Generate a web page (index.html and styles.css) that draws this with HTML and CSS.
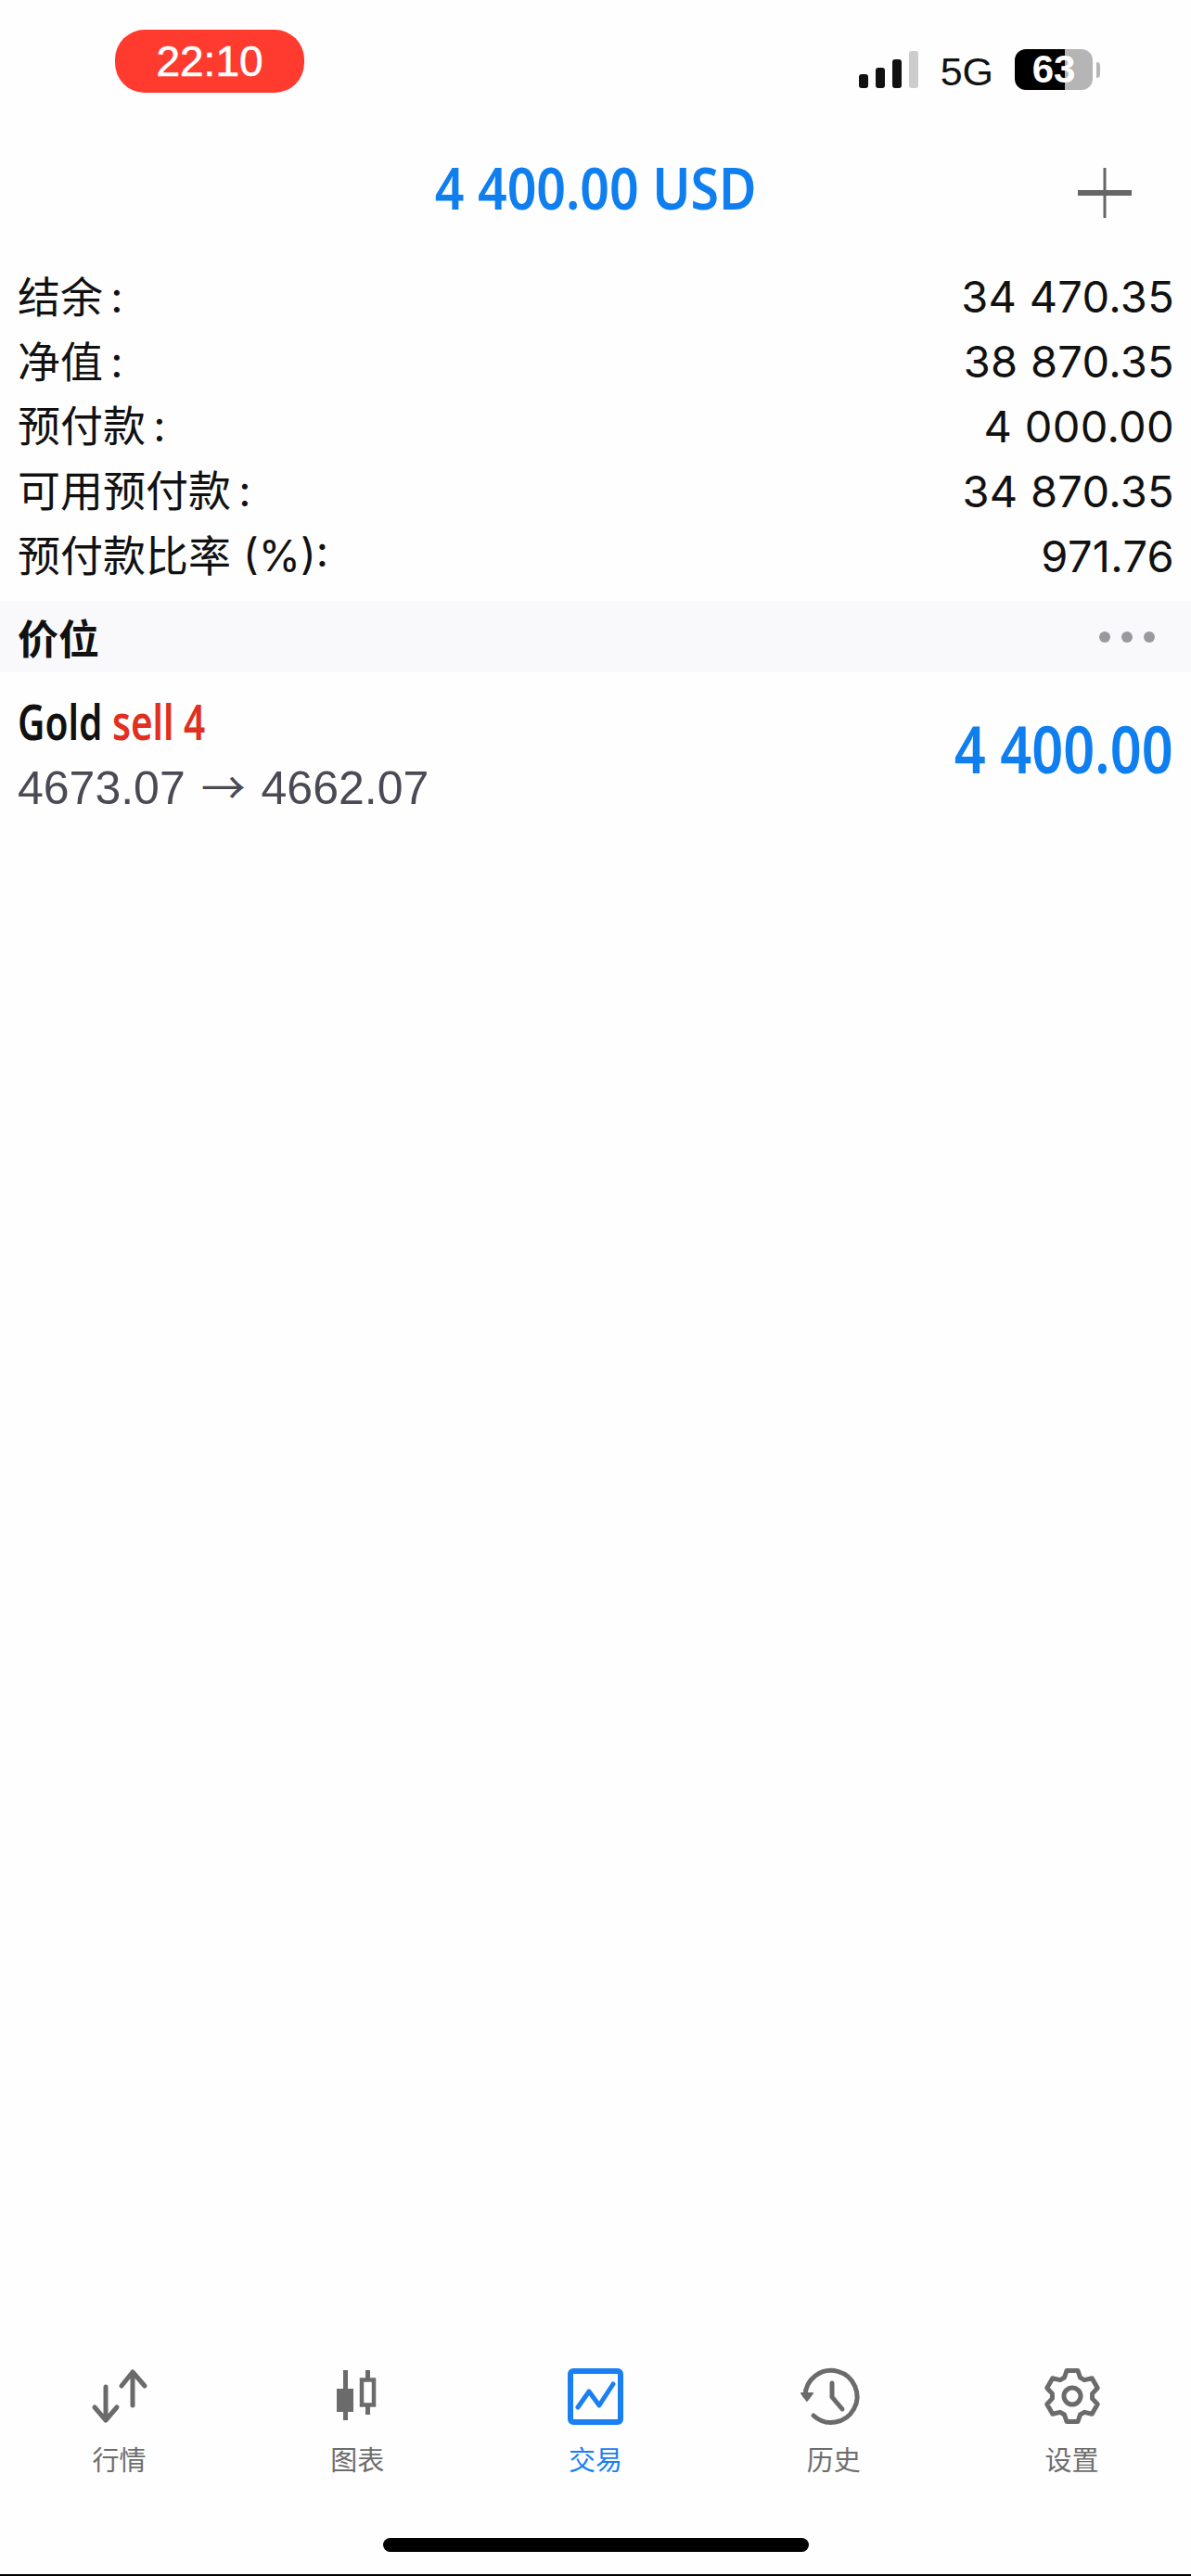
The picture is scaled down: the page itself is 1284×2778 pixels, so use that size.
FILE: index.html
```html
<!DOCTYPE html>
<html lang="zh">

<head>
    <meta name="viewport" content="width=device-width, initial-scale=1.0, user-scalable=no">
    <title>交易</title>
    <link rel="stylesheet" href="styles.css">
</head>

<body>
    <div class="status-bar">
        <div class="time-pill">22:10</div>
        <div class="status-right">
            <div class="signal">
                <span class="signal-bar bar-1"></span>
                <span class="signal-bar bar-2"></span>
                <span class="signal-bar bar-3"></span>
                <span class="signal-bar bar-4"></span>
            </div>
            <span class="network">5G</span>
            <div class="battery"><span class="battery-level">63</span></div>
            <span class="battery-nub"></span>
        </div>
    </div>

    <div class="top-bar">
        <div class="top-title"><span class="narrow narrow-title">4 400.00 USD</span></div>
        <svg class="plus-icon" width="60" height="54" viewBox="0 0 60 54">
            <rect x="28.5" y="0" width="3" height="54" fill="#666"></rect>
            <rect x="1" y="24" width="58" height="6" fill="#666"></rect>
        </svg>
    </div>

    <div class="summary">
        <div class="summary-row"><span>结余&thinsp;:</span><span>34 470.35</span></div>
        <div class="summary-row"><span>净值&thinsp;:</span><span>38 870.35</span></div>
        <div class="summary-row"><span>预付款&thinsp;:</span><span>4 000.00</span></div>
        <div class="summary-row"><span>可用预付款&thinsp;:</span><span>34 870.35</span></div>
        <div class="summary-row"><span>预付款比率 (%):</span><span>971.76</span></div>
    </div>

    <div class="section-head">
        <span class="section-title">价位</span>
        <div class="dots"><span></span><span></span><span></span></div>
    </div>

    <div class="position">
        <div class="position-info">
            <div class="position-name"><span class="narrow narrow-name">Gold <span class="sell">sell 4</span></span></div>
            <div class="position-prices">4673.07 <span class="arrow">→</span> 4662.07</div>
        </div>
        <div class="position-profit"><span class="narrow narrow-profit">4 400.00</span></div>
    </div>

    <div class="spacer"></div>

    <nav class="tab-bar">
        <div class="tab">
            <svg class="tab-icon" width="64" height="60" viewBox="0 0 64 60" fill="none" stroke="#6b6b6b" stroke-width="5" stroke-linecap="round" stroke-linejoin="round">
                <path d="M18 20V56M6 42L18 56L30 42"></path>
                <path d="M47 4V40M35 19L47 4L60 19"></path>
            </svg>
            <span>行情</span>
        </div>
        <div class="tab">
            <svg class="tab-icon" width="64" height="60" viewBox="0 0 64 60" fill="none" stroke="#6b6b6b">
                <path d="M19.500 2V56" stroke-width="5"></path>
                <rect x="10" y="22" width="18" height="25" fill="#6b6b6b" stroke="none"></rect>
                <path d="M43.500 2V50" stroke-width="5"></path>
                <rect x="37" y="12.500" width="13" height="27" fill="#fefefe" stroke-width="4.500"></rect>
            </svg>
            <span>图表</span>
        </div>
        <div class="tab tab-active">
            <svg class="tab-icon" width="64" height="60" viewBox="0 0 64 60" fill="none" stroke="#1a7ff0" stroke-linecap="round" stroke-linejoin="round">
                <rect x="5" y="3" width="54" height="55" rx="3" stroke-width="6"></rect>
                <path d="M13 42L25 25L36 40L51 17" stroke-width="5"></path>
            </svg>
            <span>交易</span>
        </div>
        <div class="tab">
            <svg class="tab-icon" width="64" height="60" viewBox="4 0 64 60" fill="none" stroke="#6b6b6b" stroke-width="5" stroke-linecap="round" stroke-linejoin="round">
                <path d="M5 30A28 28 0 1 1 14 51"></path>
                <path d="M34 16V31L45 44"></path>
                <path d="M1 27L13 27L7 35Z" fill="#6b6b6b" stroke-width="2"></path>
            </svg>
            <span>历史</span>
        </div>
        <div class="tab">
            <svg class="tab-icon" width="64" height="60" viewBox="-32 -30 64 60" fill="none" stroke="#6b6b6b" stroke-width="5" stroke-linejoin="round">
                <path d="M-8.500 -20L-6 -27.500L6 -27.500L8.500 -20L13.070 -17.360L21.250 -19.200L27.250 -8.800L21.570 -2.640L21.570 2.640L27.250 8.800L21.250 19.200L13.070 17.360L8.500 20L6 27.500L-6 27.500L-8.500 20L-13.070 17.360L-21.250 19.200L-27.250 8.800L-21.570 2.640L-21.570 -2.640L-27.250 -8.800L-21.250 -19.200L-13.070 -17.360Z"></path>
                <circle cx="0" cy="0" r="9"></circle>
            </svg>
            <span>设置</span>
        </div>
    </nav>

    <div class="home-bar"><span class="home-indicator"></span></div>
    <div class="bottom-edge"></div>
</body>

</html>
```

FILE: styles.css
```css
html {
    font-family: Inter, "Noto Sans CJK SC", sans-serif;
}

body {
    margin: 0;
    width: 1284px;
    height: 2778px;
    overflow: hidden;
    display: flex;
    flex-direction: column;
    background-color: #fefefe;
    color: #111;
}

.status-bar {
    height: 146px;
    display: flex;
    justify-content: space-between;
    padding: 32px 98px 0 124px;
    box-sizing: border-box;
}

.time-pill {
    width: 204px;
    height: 68px;
    border-radius: 32px;
    background-color: #ff3b30;
    color: white;
    font-family: "Liberation Sans", sans-serif;
    font-size: 46px;
    line-height: 68px;
    text-align: center;
    -webkit-text-stroke: 0.6px white;
}

.status-right {
    display: flex;
    align-items: flex-start;
    padding-top: 21px;
}

.signal {
    display: flex;
    align-items: flex-end;
    gap: 8px;
    height: 42px;
    margin-right: 24px;
}

.signal-bar {
    width: 10px;
    border-radius: 3px;
    background-color: #111;
}

.bar-1 {
    height: 15px;
}

.bar-2 {
    height: 22px;
}

.bar-3 {
    height: 31px;
}

.bar-4 {
    height: 40px;
    background-color: #ccc;
}

.network {
    font-family: "Liberation Sans", sans-serif;
    font-size: 43px;
    line-height: 44px;
    margin-right: 23px;
    margin-top: 2px;
}

.battery {
    width: 84px;
    height: 44px;
    border-radius: 12px;
    background: linear-gradient(to right, #000 54px, #b5b5b5 54px);
    color: white;
    font-family: "Liberation Sans", sans-serif;
    font-size: 42px;
    font-weight: bold;
    line-height: 44px;
    text-align: center;
}

.battery-level {
    display: block;
}

.battery-nub {
    width: 4px;
    height: 17px;
    margin: 14px 0 0 4px;
    border-radius: 0 4px 4px 0;
    background-color: #b5b5b5;
}

.top-bar {
    height: 130px;
    position: relative;
    display: flex;
    justify-content: center;
    align-items: center;
    flex-shrink: 0;
}

.top-title {
    color: #0f7ff0;
    padding-bottom: 18px;
}

.narrow {
    display: inline-block;
    font-family: "Noto Sans", sans-serif;
    font-weight: 600;
}

.narrow-title {
    font-size: 64px;
    line-height: 70px;
    transform: scaleX(0.866);
}

.plus-icon {
    position: absolute;
    left: 1161px;
    top: 35px;
}

.summary {
    height: 372px;
    padding: 6px 18px 0 19px;
    box-sizing: border-box;
}

.summary-row {
    height: 69.8px;
    display: flex;
    justify-content: space-between;
    align-items: center;
    font-size: 47px;
    letter-spacing: 0.3px;
}

.summary-row span:first-child {
    font-size: 46px;
    letter-spacing: 0;
}

.summary-row span:last-child {
    padding-top: 6px;
}

.section-head {
    height: 77px;
    background-color: #f9f9fb;
    display: flex;
    justify-content: space-between;
    align-items: center;
    padding: 0 39px 0 19px;
}

.section-title {
    font-size: 44px;
    font-weight: 700;
}

.dots {
    display: flex;
    gap: 12px;
}

.dots span {
    width: 12px;
    height: 12px;
    border-radius: 50%;
    background-color: #9a9a9e;
}

.position {
    display: flex;
    justify-content: space-between;
    align-items: center;
    padding: 22px 19px 0;
}

.narrow-name {
    font-size: 52px;
    line-height: 62px;
    transform: scaleX(0.78);
    transform-origin: left center;
}

.sell {
    color: #e03020;
}

.position-prices {
    font-family: "Liberation Sans", sans-serif;
    font-size: 50px;
    line-height: 62px;
    margin-top: 6px;
    word-spacing: 3px;
    color: #4a4a55;
}

.arrow {
    font-family: "Noto Sans CJK SC", sans-serif;
    font-size: 48px;
}

.position-profit {
    color: #0f7ff0;
    margin-bottom: 14px;
}

.narrow-profit {
    font-size: 70px;
    line-height: 80px;
    transform: scaleX(0.85);
    transform-origin: right center;
}

.spacer {
    flex: 1;
}

.tab-bar {
    display: grid;
    grid-template-columns: repeat(5, 1fr);
    height: 179px;
}

.tab {
    display: flex;
    flex-direction: column;
    align-items: center;
    color: #6d6d6d;
    font-size: 29px;
    line-height: 36px;
}

.tab-active {
    color: #1a7ff0;
}

.tab-icon {
    margin-bottom: 22px;
    overflow: visible;
}

.home-bar {
    height: 43px;
    display: flex;
    justify-content: center;
    padding-top: 4px;
    box-sizing: border-box;
}

.home-indicator {
    width: 459px;
    height: 15px;
    border-radius: 8px;
    background-color: #000;
}

.bottom-edge {
    height: 2px;
    background-color: #000;
}
```
